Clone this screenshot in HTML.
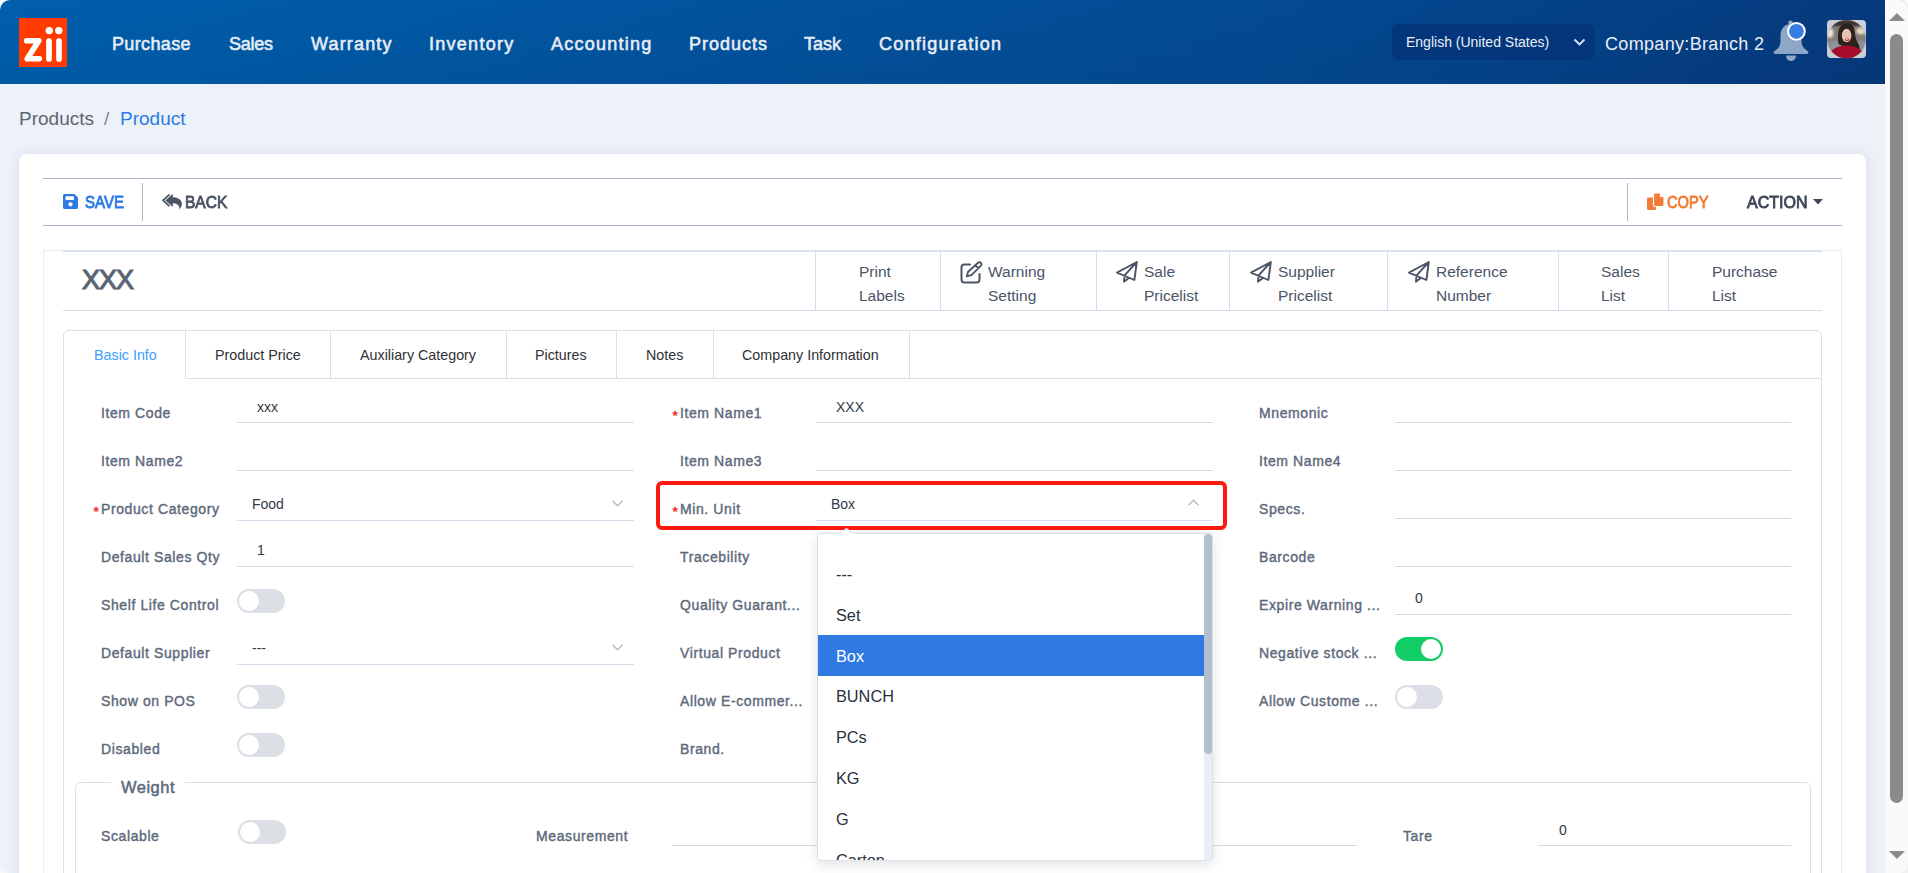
<!DOCTYPE html>
<html><head><meta charset="utf-8">
<style>
*{box-sizing:border-box;margin:0;padding:0}
html,body{width:1908px;height:873px;overflow:hidden;background:#fff}
body{font-family:"Liberation Sans",sans-serif;position:relative}
.a{position:absolute;white-space:nowrap}
svg{position:absolute;overflow:visible}
#nav{position:absolute;left:0;top:0;width:1885px;height:84px;background:linear-gradient(180deg,rgba(0,0,20,0) 0%,rgba(0,0,20,0.05) 100%),linear-gradient(90deg,#005fad 0%,#034a92 68%,#06397d 100%);border-top-left-radius:10px;overflow:hidden}
.ni{position:absolute;top:35px;font-size:18px;line-height:18px;font-weight:normal;color:#e8edf5;-webkit-text-stroke:0.55px #e8edf5;transform-origin:0 0}
#page{position:absolute;left:0;top:84px;width:1885px;height:789px;background:#edf1f8}
#sb{position:absolute;left:1885px;top:0;width:23px;height:873px;background:#fafafa}
#card{position:absolute;left:19px;top:154px;width:1847px;height:760px;background:#fff;border-radius:8px;box-shadow:0 0 12px rgba(120,140,170,.18)}
.hl{position:absolute;height:1px;background:#a9b5c7}
.vl{position:absolute;width:1px}
.lbl{position:absolute;font-size:14px;line-height:14px;color:#5d697b;-webkit-text-stroke:0.4px #5d697b;white-space:nowrap;letter-spacing:0.6px;margin-top:0px;margin-left:-1px}
.req{position:absolute;font-size:13.5px;line-height:13px;color:#f5222d;-webkit-text-stroke:0.45px #f5222d;margin-top:2px;margin-left:0.5px}
.ul{position:absolute;height:1px;background:#d3ddea}
.val{position:absolute;font-size:14px;line-height:14px;color:#333a48;white-space:nowrap;margin-top:1px}
.tg{position:absolute;width:48px;height:24px;border-radius:12px;background:#dcdfe6}
.tg::after{content:"";position:absolute;left:2px;top:2px;width:20px;height:20px;border-radius:50%;background:#fff}
.tg.on{background:#13ce66}
.tg.on::after{left:26px}
.hd{position:absolute;font-size:15.5px;line-height:24px;color:#4b5566;white-space:nowrap;margin-top:1px;margin-left:-1px}
.tab{position:absolute;top:348px;font-size:14.3px;line-height:14px;color:#303133;white-space:nowrap}
.dd{position:absolute;left:836px;font-size:16.3px;line-height:16px;color:#2b3140;white-space:nowrap}
</style></head><body>
<div id="page"></div>
<div id="nav">
  <div class="a" style="left:19px;top:18px;width:48px;height:49px;background:#ff3b00"></div>
  <svg style="left:19px;top:18px" width="48" height="49" viewBox="0 0 48 49">
    <path d="M7.6 22.7 H19.8 L8.2 40.8" fill="none" stroke="#fff" stroke-width="5.6" stroke-linecap="round" stroke-linejoin="round"/>
    <path d="M12.5 38 H20.5 C22 38 23.2 39.2 23.2 40.8 C23.2 42.4 22 43.6 20.5 43.6 H9.5 Z" fill="#fff"/>
    <line x1="30" y1="23" x2="30" y2="41" stroke="#fff" stroke-width="5.7" stroke-linecap="round"/>
    <line x1="40" y1="23" x2="40" y2="41" stroke="#fff" stroke-width="5.7" stroke-linecap="round"/>
    <circle cx="30.3" cy="12.6" r="3.7" fill="#fff"/>
    <circle cx="39.8" cy="12.6" r="3.7" fill="#fff"/>
  </svg>
  <span class="ni" style="left:112px;letter-spacing:0.36px">Purchase</span>
  <span class="ni" style="left:229px;letter-spacing:-0.25px">Sales</span>
  <span class="ni" style="left:311px;letter-spacing:1.16px">Warranty</span>
  <span class="ni" style="left:429px;letter-spacing:1.27px">Inventory</span>
  <span class="ni" style="left:551px;letter-spacing:1.25px">Accounting</span>
  <span class="ni" style="left:689px;letter-spacing:1.0px">Products</span>
  <span class="ni" style="left:804px;letter-spacing:0.03px">Task</span>
  <span class="ni" style="left:879px;letter-spacing:1.25px">Configuration</span>
  <div class="a" style="left:1392px;top:24px;width:203px;height:36px;border-radius:6px;background:#04367c"></div>
  <span class="a" style="left:1406px;top:35px;font-size:14px;line-height:14px;color:#e9eef6">English (United States)</span>
  <svg style="left:1573px;top:38px" width="13" height="9" viewBox="0 0 13 9"><polyline points="1.5,1.5 6.5,6.5 11.5,1.5" fill="none" stroke="#dfe6f0" stroke-width="1.8"/></svg>
  <span class="a" style="left:1605px;top:35px;font-size:18px;line-height:18px;color:#e9eef6;letter-spacing:0.33px">Company:Branch 2</span>
  <svg style="left:1773px;top:20px" width="37" height="42" viewBox="0 0 37 42">
    <circle cx="17.5" cy="2.8" r="2.3" fill="#8ea6c8"/>
    <path d="M18 4 C11 4 7.5 9.5 7.5 16 V21.5 C7.5 25.5 5.5 28.5 1.5 31 C0 32 0.5 34 2.2 34 H33.8 C35.5 34 36 32 34.5 31 C30.5 28.5 28.5 25.5 28.5 21.5 V16 C28.5 9.5 25 4 18 4 Z" fill="#8ea6c8"/>
    <path d="M13 35.5 H23 C23 38.8 20.8 41 18 41 C15.2 41 13 38.8 13 35.5 Z" fill="#8ea6c8"/>
    <circle cx="23.4" cy="11.3" r="8.4" fill="#3a7de0" stroke="#fff" stroke-width="2"/>
  </svg>
  <div class="a" style="left:1827px;top:20px;width:39px;height:38px;border-radius:4px;background:#c9ced8"></div>
  <svg style="left:1827px;top:20px" width="39" height="38" viewBox="0 0 39 38">
    <defs><clipPath id="avc"><circle cx="19.5" cy="19.2" r="19.2"/></clipPath>
    <filter id="avb" x="-20%" y="-20%" width="140%" height="140%"><feGaussianBlur stdDeviation="0.9"/></filter>
    <filter id="avb2" x="-20%" y="-20%" width="140%" height="140%"><feGaussianBlur stdDeviation="0.5"/></filter></defs>
    <g clip-path="url(#avc)">
      <rect x="0" y="0" width="39" height="38" fill="#807c79"/>
      <g filter="url(#avb)">
        <rect x="0" y="0" width="39" height="6" fill="#3d3330"/>
        <rect x="0" y="21" width="39" height="17" fill="#8f9297"/>
        <ellipse cx="3" cy="13" rx="3.5" ry="5" fill="#f0e4d0"/>
        <ellipse cx="34" cy="11" rx="5" ry="3.5" fill="#ead8c2"/>
      </g>
      <g filter="url(#avb2)">
        <path d="M11.5 24 C10.5 17 11 10 13 7 C15 4 18 3.5 20.5 3.5 C24 3.5 27 6 27.5 10 C28 15 28.5 20 32 25 L33 30 L24 30 Z" fill="#2a201d"/>
        <ellipse cx="19.6" cy="15.5" rx="4.8" ry="6.8" fill="#e6c2b2"/>
        <ellipse cx="20" cy="19.8" rx="2.2" ry="1.2" fill="#c9243a"/>
        <rect x="18.8" y="19.3" width="2.4" height="0.8" fill="#f5e9e6"/>
        <path d="M1 36 C4 29.5 11 25.5 19 25.5 C28 25.5 34 29 38 35 V40 H1 Z" fill="#a60d2a"/>
      </g>
    </g>
  </svg>
</div>

<span class="a" style="left:19px;top:109px;font-size:19px;line-height:19px;color:#5d6573">Products</span>
<span class="a" style="left:104px;top:109px;font-size:19px;line-height:19px;color:#7d8590">/</span>
<span class="a" style="left:120px;top:109px;font-size:19px;line-height:19px;color:#2e7be6">Product</span>
<div id="card"></div>
<!-- toolbar -->
<div class="hl" style="left:43px;top:178px;width:1799px"></div>
<div class="hl" style="left:43px;top:225px;width:1799px"></div>
<div class="vl" style="left:142px;top:183px;height:38px;background:#aeb9ca"></div>
<div class="vl" style="left:1627px;top:183px;height:38px;background:#aeb9ca"></div>
<svg style="left:63px;top:194px" width="15" height="15" viewBox="0 0 15 15">
  <path d="M1.5 0 H11.5 L15 3.5 V13.5 C15 14.3 14.3 15 13.5 15 H1.5 C0.7 15 0 14.3 0 13.5 V1.5 C0 0.7 0.7 0 1.5 0 Z" fill="#2f7be6"/>
  <rect x="2.5" y="2.3" width="8.5" height="3.6" rx="0.6" fill="#fff"/>
  <circle cx="7.5" cy="10.3" r="2.1" fill="#fff"/>
</svg>
<span class="a" style="left:85px;top:194px;font-size:16.5px;line-height:16px;-webkit-text-stroke:0.85px #2f7be6;color:#2f7be6;transform-origin:0 0;transform:scaleX(0.91)">SAVE</span>
<svg style="left:162px;top:194px" width="20" height="16" viewBox="0 0 20 16">
  <path d="M7 0.8 L1 6.4 L7 11.8" fill="none" stroke="#4b5464" stroke-width="1.7" stroke-linejoin="round" stroke-linecap="round"/>
  <path d="M3.6 6.4 L10.6 0.3 V3.6 C16 3.6 19.7 6 19.7 10 C19.7 11.8 18.8 13.4 17.4 14.8 C17.8 11.5 15.5 9 10.6 9 V12.4 Z" fill="#4b5464" stroke="#4b5464" stroke-width="0.5" stroke-linejoin="round"/>
</svg>
<span class="a" style="left:185px;top:194px;font-size:16.5px;line-height:16px;-webkit-text-stroke:0.85px #4b5464;color:#4b5464;transform-origin:0 0;transform:scaleX(0.94)">BACK</span>
<svg style="left:1647px;top:193px" width="17" height="17" viewBox="0 0 17 17">
  <rect x="0" y="4.5" width="9" height="12.5" rx="1.3" fill="#f47b35"/>
  <path d="M6.5 0 H13 L17 4 V12 C17 12.8 16.3 13.5 15.5 13.5 H8 C7.2 13.5 6.5 12.8 6.5 12 V1.5 C6.5 0.7 7.2 0 8 0 Z" fill="#f47b35" stroke="#fff" stroke-width="1.2"/>
  <path d="M13 0 V4 H17" fill="#fff"/>
</svg>
<span class="a" style="left:1667px;top:194px;font-size:16.5px;line-height:16px;-webkit-text-stroke:0.85px #f47b35;color:#f47b35;transform-origin:0 0;transform:scaleX(0.89)">COPY</span>
<span class="a" style="left:1747px;top:194px;font-size:16.5px;line-height:16px;-webkit-text-stroke:0.85px #3e4757;color:#3e4757;transform-origin:0 0;transform:scaleX(0.97)">ACTION</span>
<svg style="left:1813px;top:199px" width="10" height="6" viewBox="0 0 10 6"><path d="M0 0 H10 L5 5.5 Z" fill="#3e4757"/></svg>
<!-- product header -->
<div class="a" style="left:43px;top:250px;width:1799px;height:700px;border:1px solid #e6ecf4"></div>
<div class="a" style="left:63px;top:250px;width:1759px;height:61px;border-top:2px solid #d9e3ef;border-bottom:1px solid #d3deeb"></div>
<span class="a" style="left:82px;top:267px;font-size:27px;line-height:27px;color:#5a6474;-webkit-text-stroke:1.1px #5a6474;letter-spacing:-1px">XXX</span>
<div class="vl" style="left:815px;top:251px;height:59px;background:#d6e0ec"></div>
<div class="vl" style="left:940px;top:251px;height:59px;background:#d6e0ec"></div>
<div class="vl" style="left:1096px;top:251px;height:59px;background:#d6e0ec"></div>
<div class="vl" style="left:1229px;top:251px;height:59px;background:#d6e0ec"></div>
<div class="vl" style="left:1387px;top:251px;height:59px;background:#d6e0ec"></div>
<div class="vl" style="left:1558px;top:251px;height:59px;background:#d6e0ec"></div>
<div class="vl" style="left:1668px;top:251px;height:59px;background:#d6e0ec"></div>
<div class="hd" style="left:860px;top:259px">Print<br>Labels</div>
<div class="hd" style="left:989px;top:259px">Warning<br>Setting</div>
<div class="hd" style="left:1145px;top:259px">Sale<br>Pricelist</div>
<div class="hd" style="left:1279px;top:259px">Supplier<br>Pricelist</div>
<div class="hd" style="left:1437px;top:259px">Reference<br>Number</div>
<div class="hd" style="left:1602px;top:259px">Sales<br>List</div>
<div class="hd" style="left:1713px;top:259px">Purchase<br>List</div>
<svg style="left:960px;top:261px" width="23" height="23" viewBox="0 0 23 23">
  <path d="M10 3.5 H4.5 C2.8 3.5 1.5 4.8 1.5 6.5 V18.5 C1.5 20.2 2.8 21.5 4.5 21.5 H16.5 C18.2 21.5 19.5 20.2 19.5 18.5 V13" fill="none" stroke="#4b5566" stroke-width="2" stroke-linecap="round"/>
  <path d="M18 1.8 C18.8 1 20.2 1 20.9 1.8 C21.7 2.6 21.7 3.9 20.9 4.7 L11.5 14.1 L6.8 15.4 L8.1 10.7 Z M15.4 4.3 L18.4 7.3" fill="none" stroke="#4b5566" stroke-width="1.9" stroke-linejoin="round"/>
</svg>
<svg style="left:1116px;top:261px" width="22" height="22" viewBox="0 0 22 22">
  <path d="M20.8 1 L1 11.6 L18.4 19 Z M20.8 1 L8.6 14.4 L7.9 20.6 L13 17" fill="none" stroke="#4b5566" stroke-width="1.9" stroke-linejoin="round"/>
</svg>
<svg style="left:1250px;top:261px" width="22" height="22" viewBox="0 0 22 22">
  <path d="M20.8 1 L1 11.6 L18.4 19 Z M20.8 1 L8.6 14.4 L7.9 20.6 L13 17" fill="none" stroke="#4b5566" stroke-width="1.9" stroke-linejoin="round"/>
</svg>
<svg style="left:1408px;top:261px" width="22" height="22" viewBox="0 0 22 22">
  <path d="M20.8 1 L1 11.6 L18.4 19 Z M20.8 1 L8.6 14.4 L7.9 20.6 L13 17" fill="none" stroke="#4b5566" stroke-width="1.9" stroke-linejoin="round"/>
</svg>

<!-- tabs box -->
<div class="a" style="left:63px;top:330px;width:1759px;height:600px;border:1px solid #dcdfe6;border-radius:6px"></div>
<div class="a" style="left:185px;top:378px;width:1636px;height:1px;background:#dcdfe6"></div>
<div class="vl" style="left:185px;top:331px;height:48px;background:#dcdfe6"></div>
<div class="vl" style="left:330px;top:331px;height:48px;background:#dcdfe6"></div>
<div class="vl" style="left:506px;top:331px;height:48px;background:#dcdfe6"></div>
<div class="vl" style="left:616px;top:331px;height:48px;background:#dcdfe6"></div>
<div class="vl" style="left:713px;top:331px;height:48px;background:#dcdfe6"></div>
<div class="vl" style="left:909px;top:331px;height:48px;background:#dcdfe6"></div>
<span class="tab" style="left:94px;color:#409eff">Basic Info</span>
<span class="tab" style="left:215px">Product Price</span>
<span class="tab" style="left:360px">Auxiliary Category</span>
<span class="tab" style="left:535px">Pictures</span>
<span class="tab" style="left:646px">Notes</span>
<span class="tab" style="left:742px">Company Information</span>
<span class="lbl" style="left:102px;top:406px">Item Code</span>
<span class="req" style="left:672px;top:407px">*</span>
<span class="lbl" style="left:681px;top:406px">Item Name1</span>
<span class="lbl" style="left:1260px;top:406px">Mnemonic</span>
<span class="lbl" style="left:102px;top:454px">Item Name2</span>
<span class="lbl" style="left:681px;top:454px">Item Name3</span>
<span class="lbl" style="left:1260px;top:454px">Item Name4</span>
<span class="req" style="left:93px;top:503px">*</span>
<span class="lbl" style="left:102px;top:502px">Product Category</span>
<span class="req" style="left:672px;top:503px">*</span>
<span class="lbl" style="left:681px;top:502px">Min. Unit</span>
<span class="lbl" style="left:1260px;top:502px">Specs.</span>
<span class="lbl" style="left:102px;top:550px">Default Sales Qty</span>
<span class="lbl" style="left:681px;top:550px">Tracebility</span>
<span class="lbl" style="left:1260px;top:550px">Barcode</span>
<span class="lbl" style="left:102px;top:598px">Shelf Life Control</span>
<span class="lbl" style="left:681px;top:598px">Quality Guarant...</span>
<span class="lbl" style="left:1260px;top:598px">Expire Warning ...</span>
<span class="lbl" style="left:102px;top:646px">Default Supplier</span>
<span class="lbl" style="left:681px;top:646px">Virtual Product</span>
<span class="lbl" style="left:1260px;top:646px">Negative stock ...</span>
<span class="lbl" style="left:102px;top:694px">Show on POS</span>
<span class="lbl" style="left:681px;top:694px">Allow E-commer...</span>
<span class="lbl" style="left:1260px;top:694px">Allow Custome ...</span>
<span class="lbl" style="left:102px;top:742px">Disabled</span>
<span class="lbl" style="left:681px;top:742px">Brand.</span>
<div class="ul" style="left:237px;top:422px;width:397px"></div>
<div class="ul" style="left:237px;top:470px;width:397px"></div>
<div class="ul" style="left:237px;top:520px;width:397px"></div>
<div class="ul" style="left:237px;top:566px;width:397px"></div>
<div class="ul" style="left:237px;top:664px;width:397px"></div>
<div class="ul" style="left:816px;top:422px;width:397px"></div>
<div class="ul" style="left:816px;top:470px;width:397px"></div>
<div class="ul" style="left:816px;top:520px;width:397px"></div>
<div class="ul" style="left:1395px;top:422px;width:396px"></div>
<div class="ul" style="left:1395px;top:470px;width:396px"></div>
<div class="ul" style="left:1395px;top:518px;width:396px"></div>
<div class="ul" style="left:1395px;top:566px;width:396px"></div>
<div class="ul" style="left:1395px;top:614px;width:396px"></div>

<span class="val" style="left:257px;top:399px">xxx</span>
<span class="val" style="left:836px;top:399px">XXX</span>
<span class="val" style="left:252px;top:496px">Food</span>
<span class="val" style="left:257px;top:542px">1</span>
<span class="val" style="left:831px;top:496px">Box</span>
<span class="val" style="left:1415px;top:590px">0</span>
<span class="val" style="left:252px;top:640px">---</span>
<svg style="left:612px;top:500px" width="11" height="7" viewBox="0 0 11 7"><polyline points="0.5,0.8 5.5,5.8 10.5,0.8" fill="none" stroke="#b4bccc" stroke-width="1.5"/></svg>
<svg style="left:612px;top:644px" width="11" height="7" viewBox="0 0 11 7"><polyline points="0.5,0.8 5.5,5.8 10.5,0.8" fill="none" stroke="#b4bccc" stroke-width="1.5"/></svg>
<svg style="left:1188px;top:499px" width="11" height="7" viewBox="0 0 11 7"><polyline points="0.5,6.2 5.5,1.2 10.5,6.2" fill="none" stroke="#b4bccc" stroke-width="1.5"/></svg>
<div class="tg" style="left:237px;top:589px"></div>
<div class="tg" style="left:237px;top:685px"></div>
<div class="tg" style="left:237px;top:733px"></div>
<div class="tg on" style="left:1395px;top:637px"></div>
<div class="tg" style="left:1395px;top:685px"></div>
<!-- weight fieldset -->
<div class="a" style="left:75px;top:782px;width:1736px;height:200px;border:1px solid #dcdfe6;border-radius:6px"></div>
<div class="a" style="left:111px;top:778px;width:74px;height:8px;background:#fff"></div>
<span class="a" style="left:121px;top:779px;font-size:16.5px;line-height:16px;color:#5d697b;-webkit-text-stroke:0.5px #5d697b;letter-spacing:0.5px">Weight</span>
<span class="lbl" style="left:102px;top:829px">Scalable</span>
<span class="lbl" style="left:537px;top:829px">Measurement</span>
<span class="lbl" style="left:1404px;top:829px">Tare</span>

<div class="tg" style="left:238px;top:820px"></div>
<div class="ul" style="left:672px;top:845px;width:685px"></div>
<div class="ul" style="left:1538px;top:845px;width:253px"></div>
<span class="val" style="left:1559px;top:822px">0</span>

<!-- red highlight -->
<div class="a" style="left:656px;top:481px;width:571px;height:49px;border:4px solid #ff1a10;border-radius:6px"></div>
<!-- dropdown -->
<div class="a" style="left:817px;top:533px;width:396px;height:328px;background:#fff;border:1px solid #d9e1ec;border-radius:4px;box-shadow:0 3px 14px rgba(0,0,0,.12);overflow:hidden">
  <div class="a" style="left:0;top:101px;width:386px;height:41px;background:#2f7ae0"></div>
  <div class="a" style="left:386px;top:0;width:9px;height:328px;background:#e9eef6"></div>
  <div class="a" style="left:386px;top:0;width:9px;height:220px;background:#b3bfcf;border-radius:4.5px"></div>
</div>
<svg style="left:838px;top:528px" width="18" height="7" viewBox="0 0 18 7"><path d="M0 6 L8.5 0.5 L17 6" fill="#fff" stroke="#d9e1ec" stroke-width="1"/><rect x="0" y="6" width="18" height="1.5" fill="#fff"/></svg>
<span class="dd" style="left:836px;top:566px">---</span>
<span class="dd" style="top:607px">Set</span>
<span class="dd" style="top:648px;color:#fff">Box</span>
<span class="dd" style="top:688px">BUNCH</span>
<span class="dd" style="top:729px">PCs</span>
<span class="dd" style="top:770px">KG</span>
<span class="dd" style="top:811px">G</span>
<div class="a" style="left:817px;top:845px;width:386px;height:15px;overflow:hidden"><span class="dd" style="left:19px;top:7px">Carton</span></div>
<div id="sb">
  <div class="a" style="left:4px;top:13px;width:0;height:0;border-left:8px solid transparent;border-right:8px solid transparent;border-bottom:8px solid #8b8b8b"></div>
  <div class="a" style="left:5px;top:34px;width:13px;height:769px;border-radius:6.5px;background:#8b8b8b"></div>
  <div class="a" style="left:4px;top:851px;width:0;height:0;border-left:8px solid transparent;border-right:8px solid transparent;border-top:8px solid #8b8b8b"></div>
</div>

<div class="a" style="left:0;top:863px;width:10px;height:10px;background:radial-gradient(circle at 100% 0,rgba(255,255,255,0) 9.5px,#f6f6f6 10.5px)"></div>
<div class="a" style="left:1898px;top:0;width:10px;height:10px;background:radial-gradient(circle at 0 100%,rgba(255,255,255,0) 9.5px,#e6e6e6 10.5px,#fff 12px)"></div>
<div class="a" style="left:1898px;top:863px;width:10px;height:10px;background:radial-gradient(circle at 0 0,rgba(255,255,255,0) 9.5px,#f2f2f2 10.5px)"></div>
</body></html>
